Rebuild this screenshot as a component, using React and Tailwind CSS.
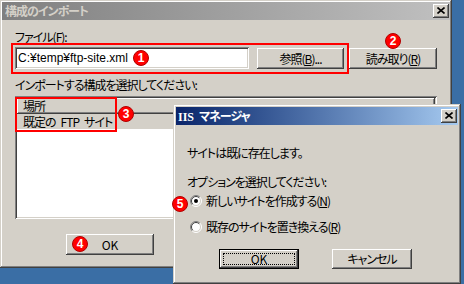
import clsx from "clsx";

const raised =
  "bg-[#d4d0c8] shadow-[inset_-1px_-1px_0_#404040,inset_1px_1px_0_#fff,inset_-2px_-2px_0_#808080,inset_2px_2px_0_#d4d0c8]";
const sunken =
  "shadow-[inset_1px_1px_0_#808080,inset_-1px_-1px_0_#fff,inset_2px_2px_0_#404040,inset_-2px_-2px_0_#d4d0c8]";
const frame =
  "bg-[#d4d0c8] shadow-[inset_-1px_-1px_0_#404040,inset_1px_1px_0_#d4d0c8,inset_-2px_-2px_0_#808080,inset_2px_2px_0_#fff]";

function Btn({ children, className }) {
  return (
    <div className={clsx("flex items-center justify-center leading-[14px]", raised, className)}>
      {children}
    </div>
  );
}

function CloseBox() {
  return (
    <div className={clsx("flex items-center justify-center w-[16px] h-[14px]", raised)}>
      <svg width="8" height="7" viewBox="0 0 8 7" className="-mt-px">
        <path d="M0.5 0.5 L7.5 6.5 M7.5 0.5 L0.5 6.5" stroke="#000" strokeWidth="1.6" />
      </svg>
    </div>
  );
}

function Radio({ checked }) {
  return (
    <svg width="12" height="12" viewBox="0 0 12 12" className="shrink-0">
      <circle cx="6" cy="6" r="5" fill="#fff" />
      <path d="M2.1 9.9 A5.5 5.5 0 0 1 9.9 2.1" stroke="#808080" fill="none" />
      <path d="M9.9 2.1 A5.5 5.5 0 0 1 2.1 9.9" stroke="#fff" fill="none" />
      <path d="M2.8 9.2 A4.5 4.5 0 0 1 9.2 2.8" stroke="#404040" fill="none" />
      <path d="M9.2 2.8 A4.5 4.5 0 0 1 2.8 9.2" stroke="#d4d0c8" fill="none" />
      {checked && <circle cx="6" cy="6" r="2" fill="#000" />}
    </svg>
  );
}

function Badge({ n, className }) {
  return (
    <div
      className={clsx(
        "absolute flex items-center justify-center w-[16px] h-[16px] rounded-full bg-[#f00] border border-[#b00000] text-white font-['Liberation_Sans',sans-serif] font-bold text-[12px] leading-none tracking-normal",
        className
      )}
    >
      {n}
    </div>
  );
}

export default function App() {
  return (
    <div className="relative w-[464px] h-[284px] overflow-hidden bg-[#3a6ea5] font-['Noto_Sans_CJK_JP',sans-serif] text-[12px] text-black tracking-[-1px] [font-feature-settings:'palt']">
      {/* main window */}
      <div className={clsx("flex flex-col w-[452px] h-[268px] p-[2px]", frame)}>
        <div className="flex items-center justify-between h-[18px] pl-[3px] pr-[1px] bg-linear-to-r from-[#808080] to-[#c0c0c0]">
          <span className="font-bold text-[#d4d0c8] leading-[14px]">構成のインポート</span>
          <CloseBox />
        </div>

        <div className="flex flex-col pl-[13px] pr-[13px]">
          <div className="mt-[10px] leading-[14px]">
            ファイル(<u>F</u>):
          </div>
          <div className="mt-[3px] flex items-start">
            <div
              className={clsx(
                "w-[234px] h-[22px] bg-white flex items-center pl-[3px] leading-[14px] tracking-normal font-['Liberation_Sans','Noto_Sans_CJK_JP',sans-serif]",
                sunken
              )}
            >
              C:¥temp¥ftp-site.xml
            </div>
            <Btn className="ml-[8px] mt-[1px] w-[87px] h-[21px]">
              参照(<u>B</u>)...
            </Btn>
            <Btn className="ml-[5px] mt-[1px] w-[88px] h-[21px]">
              読み取り(<u>R</u>)
            </Btn>
          </div>

          <div className="mt-[9px] leading-[14px]">インポートする構成を選択してください:</div>

          <div className={clsx("mt-[4px] h-[123px] bg-white p-[2px] flex flex-col", sunken)}>
            <div className={clsx("h-[16px] flex items-center pl-[6px] leading-[14px]", raised)}>場所</div>
            <div className="h-[15px] flex items-center pl-[6px] bg-[#d4d0c8] leading-[14px]">
              既定の{"\u2002"}FTP{"\u2002"}サイト
            </div>
          </div>

          <Btn className="mt-[15px] ml-[51px] w-[88px] h-[21px] tracking-normal">OK</Btn>
        </div>
      </div>

      {/* IIS dialog */}
      <div className={clsx("absolute left-[173px] top-[104px] w-[288px] h-[180px] p-[3px] flex flex-col", frame)}>
        <div className="flex items-center justify-between h-[18px] pl-[2px] pr-[1px] bg-linear-to-r from-[#0a246a] to-[#a6caf0]">
          <span className="font-bold text-white leading-[14px]">
            <span className="tracking-normal font-['Liberation_Serif',serif]">IIS</span>
            {"\u2002"}マネージャ
          </span>
          <CloseBox />
        </div>
        <div className="flex flex-col pl-[11px]">
          <div className="mt-[21px] leading-[14px]">サイトは既に存在します。</div>
          <div className="mt-[15px] leading-[14px]">オプションを選択してください:</div>
          <div className="mt-[5px] flex items-center gap-[4px] pl-[3px] leading-[14px]">
            <Radio checked />
            <span>
              新しいサイトを作成する(<u>N</u>)
            </span>
          </div>
          <div className="mt-[12px] flex items-center gap-[4px] pl-[3px] leading-[14px]">
            <Radio />
            <span>
              既存のサイトを置き換える(<u>R</u>)
            </span>
          </div>
          <div className="mt-[15px] flex">
            <div className="ml-[32px] w-[80px] h-[20px] p-[4px] flex bg-[#d4d0c8] shadow-[inset_0_0_0_1px_#000,inset_-2px_-2px_0_#404040,inset_2px_2px_0_#fff,inset_-3px_-3px_0_#808080]">
              <div className="flex-1 flex items-center justify-center border border-dotted border-black leading-[12px] tracking-normal">
                OK
              </div>
            </div>
            <Btn className="ml-[33px] w-[80px] h-[20px]">キャンセル</Btn>
          </div>
        </div>
      </div>

      {/* annotations */}
      <div className="absolute left-[11px] top-[43px] w-[338px] h-[31px] border-2 border-[#f00]" />
      <div className="absolute left-[15px] top-[97px] w-[102px] h-[35px] border-2 border-[#f00]" />
      <Badge n="1" className="left-[133px] top-[50px]" />
      <Badge n="2" className="left-[385px] top-[33px]" />
      <Badge n="3" className="left-[118px] top-[106px]" />
      <Badge n="4" className="left-[72px] top-[236px]" />
      <Badge n="5" className="left-[172px] top-[196px]" />
    </div>
  );
}
